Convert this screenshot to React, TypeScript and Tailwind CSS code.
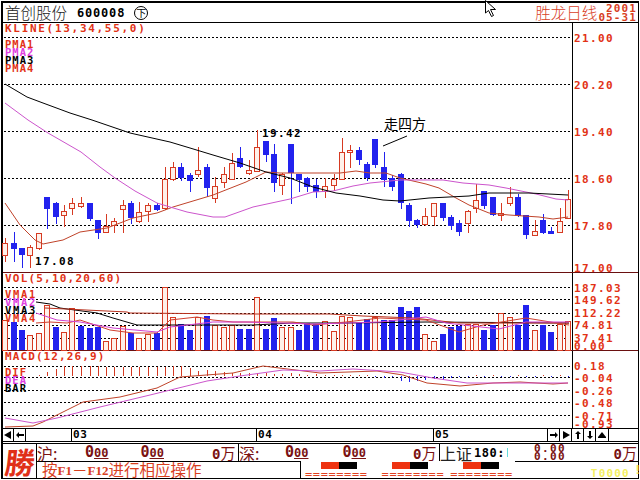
import React from "react";

type C = [number, number, number, number, number, "r" | "b"];

const RED = "#d63a22";
const BLUE = "#2222ee";
const TXT = "#e23216";
const PINK = "#cc55cc";
const FILL = "#fff1ea";

const candles: C[] = [
  [5, 238, 262, 243, 255, "r"], [14, 232, 262, 243, 249, "b"], [22, 248, 268, 248, 255, "b"], [30, 245, 268, 247, 255, "r"],
  [39, 233, 250, 233, 248, "r"], [47, 197, 229, 197, 209, "b"], [56, 202, 224, 203, 217, "b"], [64, 205, 227, 211, 215, "r"],
  [72, 198, 215, 203, 208, "r"], [81, 197, 208, 203, 206, "r"], [90, 203, 221, 203, 219, "b"], [98, 220, 239, 220, 233, "b"],
  [106, 214, 232, 226, 232, "r"], [114, 218, 233, 221, 225, "r"], [123, 200, 233, 205, 209, "r"], [131, 201, 224, 203, 218, "b"],
  [139, 202, 223, 212, 221, "r"], [148, 203, 222, 205, 211, "r"], [157, 203, 211, 205, 210, "b"], [165, 167, 210, 179, 208, "r"],
  [173, 162, 181, 167, 179, "r"], [181, 163, 181, 167, 178, "b"], [190, 173, 192, 175, 181, "b"], [198, 147, 177, 170, 174, "r"],
  [207, 164, 197, 167, 188, "b"], [215, 177, 203, 186, 198, "r"], [224, 167, 188, 174, 182, "r"], [232, 153, 179, 163, 179, "r"],
  [240, 147, 168, 158, 167, "b"], [249, 160, 175, 170, 173, "r"], [257, 130, 172, 147, 171, "r"], [266, 141, 162, 141, 155, "b"],
  [274, 144, 192, 154, 183, "b"], [282, 173, 195, 174, 185, "r"], [291, 144, 204, 144, 173, "b"], [299, 174, 192, 174, 180, "b"],
  [307, 177, 192, 178, 187, "b"], [316, 179, 198, 185, 192, "b"], [325, 178, 198, 186, 191, "r"], [334, 174, 191, 179, 185, "r"],
  [342, 138, 179, 152, 179, "r"], [350, 145, 168, 150, 152, "r"], [359, 147, 165, 150, 160, "b"], [367, 162, 181, 164, 178, "b"],
  [375, 139, 168, 139, 165, "b"], [384, 152, 187, 167, 180, "b"], [392, 175, 191, 178, 187, "b"], [401, 173, 209, 174, 203, "b"],
  [409, 203, 227, 205, 221, "b"], [417, 219, 228, 220, 225, "b"], [425, 208, 226, 216, 224, "r"], [434, 203, 226, 203, 216, "r"],
  [443, 203, 221, 203, 218, "b"], [451, 215, 230, 217, 226, "b"], [459, 220, 236, 223, 232, "b"], [468, 210, 233, 211, 223, "r"],
  [476, 184, 213, 200, 208, "r"], [484, 191, 209, 191, 206, "b"], [493, 197, 216, 197, 215, "b"], [501, 203, 221, 213, 215, "r"],
  [510, 187, 206, 197, 203, "r"], [518, 194, 217, 197, 216, "b"], [526, 215, 239, 215, 235, "b"], [535, 220, 236, 231, 235, "r"],
  [543, 214, 234, 220, 233, "b"], [551, 227, 234, 231, 234, "b"], [560, 208, 232, 221, 232, "r"], [568, 190, 218, 199, 218, "r"],
];

const vols = [
  320, 322, 330, 335, 333, 305, 327, 332, 308, 326, 328, 327, 341, 338, 326, 333, 338, 334, 333, 287, 317, 324, 330, 317, 316,
  325, 327, 325, 329, 329, 297, 329, 318, 327, 327, 330, 323, 324, 321, 331, 316, 317, 323, 319, 317, 320, 320, 307, 311, 307, 334,
  341, 334, 327, 326, 324, 324, 330, 325, 313, 317, 325, 305, 330, 325, 332, 324, 321,
];
const volColors = "rbbrrrbrrbbbrrrbrrbrrbbrbrrrbbrbbrrbbbrrrrbbrbbbbbrrbbbrrbbrrbbrbbrr";

const pts = (a: number[][]) => a.map((p) => p.join(",")).join(" ");

const pma1 = [[5,203],[20,225],[35,240],[43,244],[63,240],[80,232],[107,228],[133,218],[157,213],[173,207],[213,195],[246,182],[266,172],[280,173],[340,173],[356,171],[370,173],[386,173],[400,178],[426,184],[439,188],[456,198],[469,205],[489,213],[509,215],[539,217],[553,219],[568,217]];
const pma2 = [[5,103],[28,120],[48,133],[81,152],[100,167],[115,178],[135,191],[157,203],[170,207],[187,212],[213,217],[225,217],[253,207],[290,199],[313,192],[333,191],[353,186],[370,183],[400,180],[426,180],[443,180],[463,183],[489,185],[506,188],[526,192],[536,194],[556,199],[568,200]];
const pma3 = [[5,84],[27,97],[43,103],[70,113],[92,120],[130,133],[170,142],[190,148],[213,155],[240,163],[266,172],[290,178],[313,187],[336,193],[360,196],[383,200],[400,201],[429,198],[469,196],[489,193],[529,193],[568,195]];

const vBlack = [[36,302],[50,304],[60,308],[97,313],[113,318],[137,325],[160,325],[253,325],[293,323],[346,323],[426,322],[569,323]];
const vDark = [[45,308],[127,312],[130,313],[246,314],[330,314],[363,316],[413,318],[459,323],[569,323]];
const vRed = [[36,323],[50,322],[67,323],[80,320],[110,330],[133,333],[157,333],[170,320],[197,317],[213,320],[233,322],[293,322],[313,325],[346,322],[380,318],[426,320],[459,332],[483,325],[526,318],[569,325]];
const vPink = [[36,313],[57,320],[80,322],[113,328],[157,332],[170,327],[213,322],[246,322],[313,324],[380,322],[426,317],[446,323],[499,329],[526,322],[569,322]];

const dif = [[5,427],[33,426],[43,422],[83,402],[120,397],[157,388],[180,377],[233,373],[263,366],[320,373],[377,371],[403,375],[427,383],[460,386],[493,383],[520,382],[553,384],[568,383]];
const dea = [[5,418],[33,423],[57,418],[100,407],[150,395],[207,381],[240,376],[283,370],[320,371],[353,369],[400,372],[433,378],[467,383],[520,383],[568,383]];
const macd = [0,0,0,0,1,4,7,10,10,10,10,10,9,9,9,9,9,9,9,9,10,10,8,5,6,5,4,3,3,3,3,3,2,2,3,2,1,2,1,1,1,1,1,1,-1,-2,-1,-5,-6,-5,-4,-3,-4,-2,-1,-1,1,-1,1,-1,-1,1,-1,-1,1,-1,1,-1];

const mono = "font-['DejaVu_Sans_Mono',monospace] font-bold";

function Grid({ ys, x2 = 572 }: { ys: number[]; x2?: number }) {
  return (
    <>
      {ys.map((y) => (
        <line key={y} x1={4} x2={x2} y1={y + 0.5} y2={y + 0.5} stroke="#000" strokeWidth={1} strokeDasharray="2 2" shapeRendering="crispEdges" />
      ))}
    </>
  );
}

function Axis({ top, bottom }: { top: number; bottom: number }) {
  return <rect x={572} y={top} width={1} height={bottom - top} fill="#000" />;
}

function Labels({ items }: { items: [string, number][] }) {
  return (
    <>
      {items.map(([t, y]) => (
        <text key={t} x={574} y={y} fill={TXT} fontSize={11} letterSpacing={1.4} className={mono}>
          {t}
        </text>
      ))}
    </>
  );
}

function Line({ p, c }: { p: number[][]; c: string }) {
  return <polyline points={pts(p)} fill="none" stroke={c} strokeWidth={1} />;
}

function Legend({ items, className }: { items: [string, string][]; className: string }) {
  return (
    <div className={`absolute left-[2px] flex flex-col text-[10.5px] leading-[8px] ${mono} ${className}`}>
      {items.map(([t, c]) => (
        <span key={t} style={{ color: c }} className="h-[8px]">
          {t}
        </span>
      ))}
    </div>
  );
}

function KlinePane() {
  return (
    <div className="relative h-[250px] border-b border-[#6a1010]">
      <svg width={635} height={249} viewBox="3 23 635 249" className="block overflow-visible">
        <Grid ys={[37, 84, 131, 178, 225]} />
        <Axis top={23} bottom={272} />
        {candles.map(([x, hi, lo, t, b, k], i) => (
          <g key={i} shapeRendering="crispEdges">
            <rect x={x} y={hi} width={1} height={lo - hi} fill={k === "r" ? RED : BLUE} />
            {k === "r" ? (
              <rect x={x - 2.5} y={t + 0.5} width={5} height={b - t} fill={FILL} stroke={RED} strokeWidth={1} />
            ) : (
              <rect x={x - 3} y={t} width={6} height={b - t} fill={BLUE} />
            )}
          </g>
        ))}
        <Line p={pma1} c="#c0432a" />
        <Line p={pma2} c={PINK} />
        <Line p={pma3} c="#000" />
        <text x={35} y={265} fontSize={11} letterSpacing={1.4} fill="#000" className={mono}>17.08</text>
        <text x={262} y={137} fontSize={11} letterSpacing={1.4} fill="#000" className={mono}>19.42</text>
        <text x={384} y={129} fontSize={14} fill="#000" className="font-['Noto_Sans_CJK_SC',sans-serif]">走四方</text>
        <line x1={383} y1={146} x2={407} y2={136} stroke="#000" strokeWidth={1} />
        <Labels items={[["21.00", 42], ["20.20", 89], ["19.40", 136], ["18.60", 183], ["17.80", 230], ["17.00", 272]]} />
      </svg>
      <div className={`absolute left-[2px] top-[1px] text-[11px] leading-[10px] tracking-[1.7px] text-[#e23216] ${mono}`}>KLINE(13,34,55,0)</div>
      <Legend
        className="top-[17px] tracking-[1px]"
        items={[["PMA1", TXT], ["PMA2", "#e040e0"], ["PMA3", "#000"], ["PMA4", TXT]]}
      />
    </div>
  );
}

function VolPane() {
  return (
    <div className="relative h-[78px] border-b border-[#6a1010]">
      <svg width={635} height={77} viewBox="3 273 635 77" className="block overflow-visible">
        <Grid ys={[287, 299, 313, 325, 338]} />
        <Axis top={273} bottom={350} />
        {candles.map(([x], i) =>
          volColors[i] === "r" ? (
            <rect key={i} x={x - 2.5} y={vols[i] + 0.5} width={5} height={350 - vols[i]} fill={FILL} stroke={RED} shapeRendering="crispEdges" />
          ) : (
            <rect key={i} x={x - 3} y={vols[i]} width={6} height={350 - vols[i]} fill={BLUE} shapeRendering="crispEdges" />
          )
        )}
        <Line p={vBlack} c="#000" />
        <Line p={vDark} c="#b8301c" />
        <Line p={vRed} c="#d04030" />
        <Line p={vPink} c="#d040d0" />
        <Labels items={[["187.03", 292], ["149.62", 304], ["112.22", 317], ["74.81", 329], ["37.41", 342], ["0.00", 350]]} />
      </svg>
      <div className={`absolute left-[2px] top-[1px] text-[11px] leading-[10px] tracking-[1.2px] text-[#e23216] ${mono}`}>VOL(5,10,20,60)</div>
      <Legend
        className="top-[17px] tracking-[1.7px]"
        items={[["VMA1", TXT], ["VMA2", "#e040e0"], ["VMA3", "#000"], ["VMA4", TXT]]}
      />
    </div>
  );
}

function MacdPane() {
  return (
    <div className="relative h-[78px] border-b border-black">
      <svg width={635} height={77} viewBox="3 351 635 77" className="block overflow-visible">
        <Grid ys={[366, 377, 390, 402, 415]} />
        <Axis top={351} bottom={428} />
        {candles.map(([x], i) => {
          const v = macd[i];
          return v > 0 ? (
            <rect key={i} x={x} y={376 - v} width={1} height={v} fill={RED} />
          ) : (
            <rect key={i} x={x} y={376} width={1} height={-v} fill={BLUE} />
          );
        })}
        <Line p={dif} c="#c0432a" />
        <Line p={dea} c={PINK} />
        <Labels items={[["0.18", 370], ["-0.04", 382], ["-0.26", 395], ["-0.48", 407], ["-0.71", 420], ["-0.93", 428]]} />
      </svg>
      <div className={`absolute left-[2px] top-[1px] text-[11px] leading-[10px] tracking-[1.1px] text-[#e23216] ${mono}`}>MACD(12,26,9)</div>
      <Legend
        className="top-[17px] tracking-[1px]"
        items={[["DIF", TXT], ["DEA", "#e040e0"], ["BAR", "#000"]]}
      />
    </div>
  );
}

function Btn({ w, d }: { w: string; d: string }) {
  return (
    <div className={`flex h-full items-center justify-center border-r border-black ${w}`}>
      <svg width={10} height={10} viewBox="0 0 10 10">
        <path d={d} fill="#000" />
      </svg>
    </div>
  );
}

const TimeTick = ({ w, t }: { w: string; t: string }) => (
  <div className={`h-full border-r border-black pl-[1px] text-[11px] leading-[12px] tracking-[0.6px] text-black ${w} ${mono}`}>{t}</div>
);

function TimeBar() {
  return (
    <div className="flex h-[15px] border-b-[3px] border-double border-black">
      <Btn w="w-[11px]" d="M1 5 L8 1 L8 9 Z" />
      <Btn w="w-[12px]" d="M1 5 L4 2 L4 4 L9 4 L9 6 L4 6 L4 8 Z" />
      <div className="h-full w-[46px] border-r border-black" />
      <TimeTick w="w-[185px]" t="03" />
      <TimeTick w="w-[177px]" t="04" />
      <TimeTick w="w-[114px]" t="05" />
      <Btn w="w-[12px]" d="M9 5 L6 2 L6 4 L1 4 L1 6 L6 6 L6 8 Z" />
      <Btn w="w-[12px]" d="M9 5 L2 1 L2 9 Z" />
      <Btn w="w-[12px]" d="M5 1 L8 4 L6 4 L6 9 L4 9 L4 4 L2 4 Z" />
      <Btn w="w-[12px]" d="M5 9 L8 6 L6 6 L6 1 L4 1 L4 6 L2 6 Z" />
      <Btn w="w-[13px]" d="M5 2 L9 7 L9 8 L1 8 L1 7 Z" />
    </div>
  );
}

const Zero = ({ className = "" }: { className?: string }) => (
  <span className={`flex items-baseline text-[#7a1212] ${mono} ${className}`}>
    <span className="text-[15px] leading-none">0</span>
    <span className="text-[12px] leading-none underline">00</span>
  </span>
);

const Wan = ({ className = "" }: { className?: string }) => (
  <span className={`flex items-baseline text-[15px] leading-none text-[#7a1212] ${className}`}>
    <span className={`text-[14px] leading-none ${mono}`}>0</span>
    <span>万</span>
  </span>
);

function Quote({ label, w, gap1, gap2, gap3 }: { label: string; w: string; gap1: string; gap2: string; gap3: string }) {
  return (
    <div className={`flex h-full shrink-0 items-center border-r border-black ${w}`}>
      <span className="w-[21px] whitespace-nowrap text-[16px] leading-none text-[#7a1212]">{label}</span>
      <Zero className={gap1} />
      <Zero className={gap2} />
      <Wan className={gap3} />
    </div>
  );
}

const Pair = ({ className }: { className: string }) => (
  <div className={`flex h-[7px] ${className}`}>
    <div className="h-[7px] w-[18px] bg-[#ee3311]" />
    <div className="h-[7px] w-[18px] bg-black" />
  </div>
);

const Eq = ({ className, children }: { className: string; children: string }) => (
  <span className={`text-[12px] leading-[8px] tracking-[0.6px] text-[#e04020] font-['DejaVu_Sans_Mono',monospace] ${className}`}>{children}</span>
);

function Bottom() {
  return (
    <div className="flex h-[34px] font-['Noto_Sans_CJK_SC',sans-serif]">
      <div className="flex w-[34px] shrink-0 items-center justify-center overflow-hidden border-r border-black">
        <span className="-skew-x-6 text-[30px] font-bold leading-none text-[#e03018] font-['Noto_Sans_CJK_TC',sans-serif]">勝</span>
      </div>
      <div className="flex min-w-0 flex-1 flex-col">
        <div className="flex h-[17px]">
          <Quote label="沪:" w="w-[202px]" gap1="ml-[27px]" gap2="ml-[32px]" gap3="ml-[48px]" />
          <Quote label="深:" w="w-[201px]" gap1="ml-[25px]" gap2="ml-[34px]" gap3="ml-[47px]" />
          <div className="flex h-full flex-1 items-center">
            <span className="text-[16px] leading-none text-[#222]">上证</span>
            <span className={`ml-[2px] text-[12px] tracking-[0.5px] leading-none text-black ${mono}`}>180:</span>
            <span className="ml-[2px] h-[9px] w-[1px] bg-[#66dddd]" />
            <span className={`ml-[26px] flex flex-col text-[11px] leading-[8px] tracking-[1.4px] text-[#7a1212] ${mono}`}>
              <span>0.00</span>
              <span>0.00</span>
            </span>
            <Wan className="ml-auto mr-[1px]" />
          </div>
        </div>
        <div className="flex h-[17px]">
          <div className="flex w-[264px] shrink-0 items-center border-r border-t border-black pl-[5px] text-[15.5px] leading-none text-[#d8401f]">
            按<span className="font-['Liberation_Serif',serif] text-[13px] font-bold">F1</span>－<span className="font-['Liberation_Serif',serif] text-[13px] font-bold">F12</span>进行相应操作
          </div>
          <div className="flex min-w-0 flex-1 flex-col">
            <div className="ml-[214px] h-0 border-t border-black" />
            <div className="flex h-[8px]">
              <Pair className="ml-[20px]" />
              <Pair className="ml-[35px]" />
              <Pair className="ml-[35px]" />
            </div>
            <div className="mt-[1px] flex items-center">
              <Eq className="ml-[4px]">========</Eq>
              <Eq className="ml-[14px]">========</Eq>
              <Eq className="ml-[6px]">========</Eq>
              <span className={`ml-[78px] text-[11px] leading-[8px] tracking-[1.2px] text-[#f4f060] ${mono}`}>T0000</span>
              <span className={`ml-[4px] -translate-y-[4px] text-[12px] leading-[8px] text-[#f4f060] ${mono}`}>!</span>
            </div>
          </div>
        </div>
      </div>
    </div>
  );
}

function Header() {
  return (
    <div className="flex h-[20px] items-center border-b border-black font-['Noto_Sans_CJK_SC',sans-serif]">
      <span className="ml-[2px] text-[15.5px] font-light leading-none text-[#222]">首创股份</span>
      <span className={`ml-[10px] text-[12px] tracking-[0.8px] leading-none text-black ${mono}`}>600008</span>
      <span className="ml-[9px] flex h-[14px] w-[14px] items-center justify-center rounded-full border border-black text-[10px] leading-none text-black">下</span>
      <span className="ml-auto text-[15.5px] font-light leading-none text-[#d8401f]">胜龙日线</span>
      <span className={`mr-[1px] ml-[1px] flex flex-col items-end text-[11px] leading-[9px] tracking-[1.1px] text-[#d8401f] ${mono}`}>
        <span>2001</span>
        <span>05-31</span>
      </span>
    </div>
  );
}

export default function App() {
  return (
    <div className="relative h-[480px] w-[640px] overflow-hidden bg-white p-[1px]">
      <div className="h-full w-full border-b border-l-2 border-r border-t-2 border-black">
        <Header />
        <KlinePane />
        <VolPane />
        <MacdPane />
        <TimeBar />
        <Bottom />
      </div>
      <svg className="absolute left-[485px] top-0" width={13} height={18} viewBox="0 0 13 18">
        <path d="M0.5 0.5 L0.5 13 L3.5 10.5 L6.5 16.5 L8.5 15.5 L5.5 9.5 L10.5 9.5 Z" fill="#fff" stroke="#000" strokeWidth={1} />
      </svg>
    </div>
  );
}
